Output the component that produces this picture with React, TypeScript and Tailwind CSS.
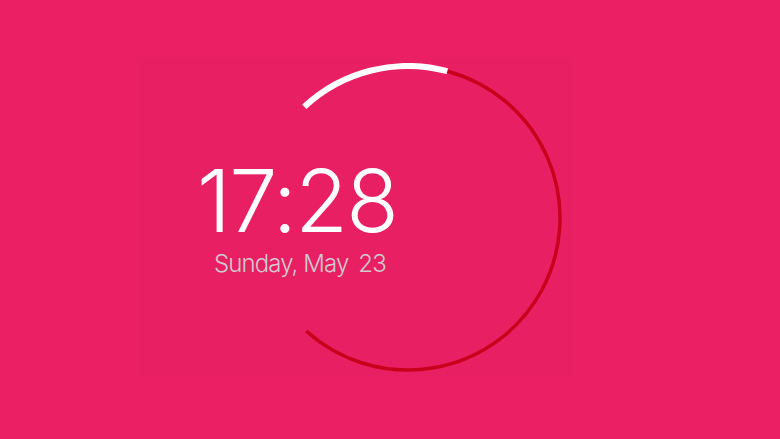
const ring = {
  // angles measured clockwise from 12 o'clock
  redFrom: 15,
  redTo: 222,
  whiteFrom: 317,
};

function pt(deg: number, r = 152, c = 155) {
  const a = (deg * Math.PI) / 180;
  return `${(c + r * Math.sin(a)).toFixed(1)} ${(c - r * Math.cos(a)).toFixed(1)}`;
}

function Ring() {
  return (
    <svg width="310" height="310" viewBox="0 0 310 310" className="absolute inset-0">
      <path d={`M ${pt(ring.redFrom)} A 152 152 0 1 1 ${pt(ring.redTo)}`} fill="none" stroke="#c9001c" strokeWidth="3.5" />
      <path d={`M ${pt(ring.whiteFrom)} A 152 152 0 0 1 ${pt(ring.redFrom)}`} fill="none" stroke="#ffffff" strokeWidth="6" />
    </svg>
  );
}

export default function App() {
  return (
    <div className="w-[780px] h-[439px] bg-[#ea1f64] pl-[138px] pt-[58px] overflow-hidden">
      <div className="w-[434px] h-[319px] bg-[#e81f62] pl-[115px] pt-[5px]">
        <div className="relative w-[310px] h-[310px]">
          <Ring />
          <div className="absolute left-[-56px] top-[95px] flex flex-col font-['Inter','Liberation_Sans',sans-serif]">
            <span className="text-[86px] leading-none font-light text-white tracking-[-1.7px]">17:28</span>
            <span className="mt-[8px] ml-[17px] text-[24px] leading-none font-light text-[#d3cad0] tracking-[-0.9px]">
              Sunday, May<span className="ml-[10px]">23</span>
            </span>
          </div>
        </div>
      </div>
    </div>
  );
}
